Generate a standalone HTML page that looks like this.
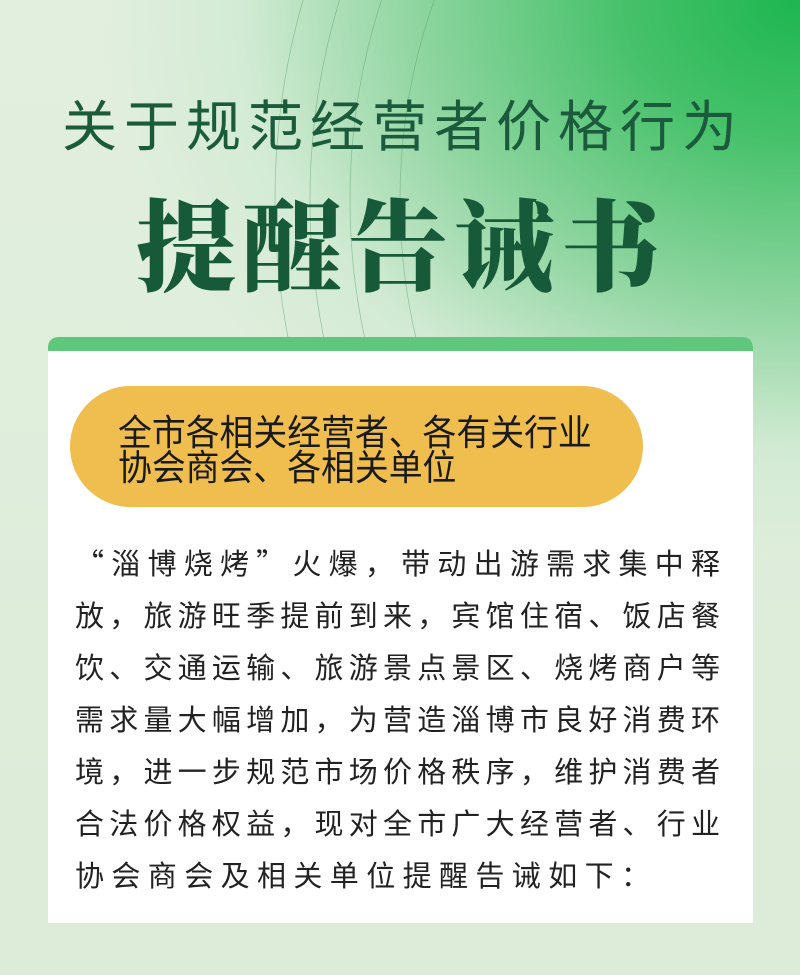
<!DOCTYPE html>
<html><head><meta charset="utf-8">
<style>
html,body{margin:0;padding:0}
body{width:800px;height:975px;position:relative;overflow:hidden;background:#e2efdf;
font-family:"Liberation Sans","Noto Sans CJK SC",sans-serif;}
.bg{position:absolute;inset:0;
background:
radial-gradient(ellipse 700px 560px at 800px 0px,#1db650 0%,#46c16a 25%,#8fd5a0 55%,rgba(200,232,205,0.6) 80%,rgba(226,239,223,0) 100%),
linear-gradient(180deg,#e2efdf 0%,#dcecd8 100%);}
.t1{position:absolute;left:0;width:800px;top:90px;text-align:center;font-family:"Noto Sans CJK SC",sans-serif;font-size:55px;line-height:64px;color:#1b5b3c;font-weight:400;letter-spacing:7px;padding-left:6px;box-sizing:border-box}
.t2{position:absolute;left:0;width:800px;top:180px;text-align:center;font-family:"Noto Serif CJK SC",serif;font-size:100px;line-height:120px;color:#175a3a;font-weight:900;letter-spacing:6px;padding-left:2px;box-sizing:border-box}
.card{position:absolute;left:48px;top:337px;width:705px;height:586px;background:#fff;border-radius:10px 10px 0 0;overflow:hidden}
.strip{position:absolute;left:0;top:0;width:100%;height:14px;background:#5ec77c}
.pill{position:absolute;left:22px;top:49px;width:573px;height:121px;background:#f0be4e;border-radius:61px}
.pill div{position:absolute;left:48px;font-family:"Noto Sans CJK SC",sans-serif;font-size:36px;color:#1a1a1a;line-height:36px;transform:scaleX(0.94);transform-origin:0 0;white-space:nowrap}
.body{position:absolute;left:27px;top:199px;width:645px}
.body div{font-family:"Noto Sans CJK SC",sans-serif;font-size:29px;line-height:52px;height:52px;color:#222;text-align:justify;text-align-last:justify}
</style></head><body>
<div class="bg"></div>
<svg style="position:absolute;left:0;top:0" width="800" height="400">
<g fill="none" stroke="#5aa06a" stroke-width="0.8" opacity="0.5">
<circle cx="1000" cy="200" r="725"/>
<circle cx="1000" cy="200" r="690"/>
<circle cx="1000" cy="200" r="650"/>
<circle cx="1000" cy="200" r="600"/>
</g></svg>
<div class="t1">关于规范经营者价格行为</div>
<div class="t2">提醒告诫书</div>
<div class="card">
<div class="strip"></div>
<div class="pill">
<div style="top:26px">全市各相关经营者、各有关行业</div>
<div style="top:61px">协会商会、各相关单位</div>
</div>
<div class="body">
<div>“淄博烧烤”火爆，带动出游需求集中释</div>
<div>放，旅游旺季提前到来，宾馆住宿、饭店餐</div>
<div>饮、交通运输、旅游景点景区、烧烤商户等</div>
<div>需求量大幅增加，为营造淄博市良好消费环</div>
<div>境，进一步规范市场价格秩序，维护消费者</div>
<div>合法价格权益，现对全市广大经营者、行业</div>
<div style="text-align-last:left;letter-spacing:7.4px">协会商会及相关单位提醒告诫如下：</div>
</div>
</div>
</body></html>
